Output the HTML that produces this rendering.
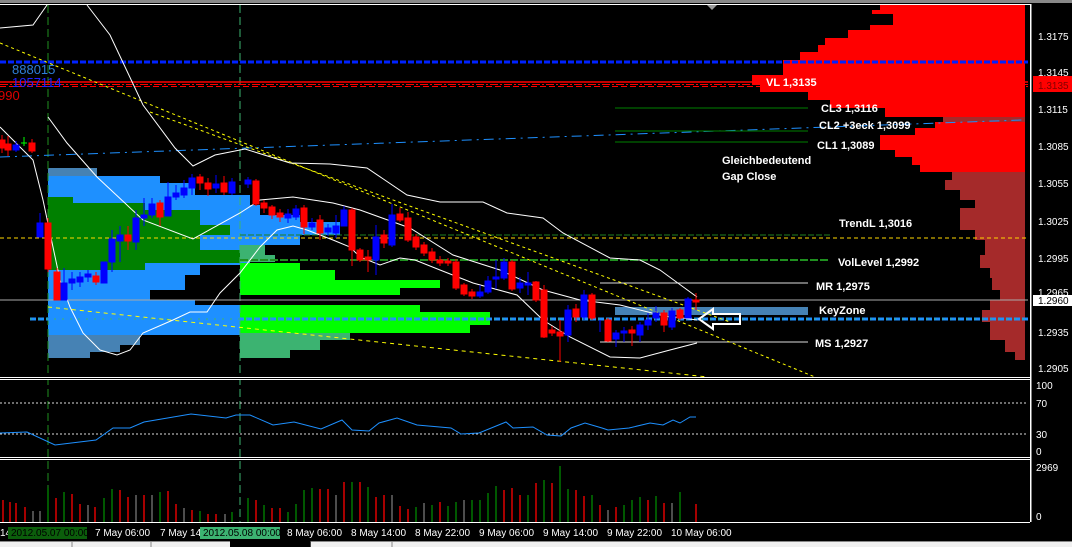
<!DOCTYPE html>
<html><head><meta charset="utf-8"><style>
html,body{margin:0;padding:0;background:#000;width:1072px;height:547px;overflow:hidden}
svg{display:block}
text{font-family:"Liberation Sans",sans-serif}
.l{fill:#fff;font-weight:bold;font-size:11px}
.a{fill:#fff;font-size:10px}
.t{fill:#fff;font-size:10px}
</style></head><body>
<svg width="1072" height="547" viewBox="0 0 1072 547" xmlns="http://www.w3.org/2000/svg">
<rect width="1072" height="547" fill="#000"/>
<rect x="0" y="0" width="1072" height="3" fill="#888"/>
<line x1="0" y1="4.5" x2="1030" y2="4.5" stroke="#fff"/>
<polygon points="707,5 717,5 712,10" fill="#999"/>

<!-- right red profile -->
<polygon fill="#ff0000" points="1025,5 880,5 880,10 872,10 872,14 893,14 893,25 870,25 870,30 848,30 848,38 825,38 825,45 818,45 818,52 800,52 800,60 783,60 783,75 752,75 752,85 760,85 760,92 808,92 808,100 830,100 830,108 885,108 885,117 1025,117"/>
<rect x="943" y="117" width="82" height="5" fill="#a52a2a"/>
<polygon fill="#ff0000" points="1025,122 935,122 935,128 915,128 915,135 880,135 880,150 895,150 895,157 912,157 912,165 920,165 920,172 1025,172"/>
<polygon fill="#a52a2a" points="1025,172 952,172 952,180 945,180 945,190 960,190 960,200 975,200 975,208 960,208 960,230 975,230 975,240 985,240 985,255 980,255 980,268 990,268 990,278 992,278 992,290 1000,290 1000,300 990,300 990,310 982,310 982,322 990,322 990,340 1005,340 1005,352 1015,352 1015,360 1025,360"/>

<!-- left profile -->
<polygon fill="#4682b4" points="48,168 97,168 97,176 48,176"/>
<polygon fill="#1e90ff" points="48,176 160,176 160,183 195,183 195,195 250,195 250,205 260,205 260,215 300,215 300,222 340,222 340,235 300,235 300,245 250,245 250,265 200,265 200,275 185,275 185,290 150,290 150,300 195,300 195,305 240,305 240,335 48,335"/>
<polygon fill="#008000" points="48,197 73,197 73,203 145,203 145,210 200,210 200,225 230,225 230,235 200,235 200,250 240,250 240,263 145,263 145,270 48,270"/>
<polygon fill="#4682b4" points="48,335 140,335 140,345 120,345 120,352 90,352 90,358 48,358"/>
<!-- second profile -->
<polygon fill="#3cb371" points="240,245 265,245 265,255 275,255 275,262 240,262"/>
<polygon fill="#00ff00" points="240,263 300,263 300,270 335,270 335,280 440,280 440,288 400,288 400,295 240,295"/>
<polygon fill="#00ff00" points="240,305 420,305 420,312 490,312 490,325 470,325 470,333 240,333"/>
<polygon fill="#3cb371" points="240,333 350,333 350,340 320,340 320,350 290,350 290,358 240,358"/>

<!-- vertical dashed -->
<line x1="48" y1="5" x2="48" y2="522" stroke="#1f8f1f" stroke-dasharray="8,4"/>
<line x1="240" y1="5" x2="240" y2="522" stroke="#3cb371" stroke-dasharray="8,4"/>

<!-- horizontal levels -->
<line x1="0" y1="62" x2="1028" y2="62" stroke="#0022ff" stroke-width="3" stroke-dasharray="6,2"/>
<line x1="0" y1="82" x2="1028" y2="82" stroke="#ff0000" stroke-width="1.5"/>
<line x1="0" y1="84.5" x2="1028" y2="84.5" stroke="#ff0000" stroke-dasharray="8,2,2,2"/>
<line x1="0" y1="86.5" x2="1028" y2="86.5" stroke="#ff0000" stroke-dasharray="6,3"/>
<line x1="0" y1="157" x2="1022" y2="120" stroke="#1e90ff" stroke-dasharray="10,5,2,5"/>
<line x1="615" y1="108" x2="808" y2="108" stroke="#008000"/>
<line x1="615" y1="131" x2="808" y2="131" stroke="#008000"/>
<line x1="615" y1="142" x2="808" y2="142" stroke="#008000"/>
<line x1="0" y1="238" x2="1028" y2="238" stroke="#ffd700" stroke-dasharray="4,3"/>
<line x1="240" y1="235" x2="830" y2="235" stroke="#1f7f1f" stroke-dasharray="6,2"/>
<line x1="240" y1="260" x2="830" y2="260" stroke="#1f8f1f" stroke-width="2" stroke-dasharray="8,2"/>
<line x1="0" y1="300" x2="1028" y2="300" stroke="#aaa"/>
<line x1="600" y1="283" x2="808" y2="283" stroke="#ddd"/>
<line x1="600" y1="342" x2="808" y2="342" stroke="#ddd"/>
<rect x="615" y="307" width="193" height="8" fill="#4682b4"/>
<line x1="30" y1="319" x2="1028" y2="319" stroke="#1e90ff" stroke-width="3" stroke-dasharray="6,2"/>
<line x1="30" y1="319" x2="1028" y2="319" stroke="#3cb371" stroke-width="1" stroke-dasharray="2,6"/>

<!-- yellow trend lines -->
<line x1="0" y1="43" x2="815" y2="377" stroke="#ffff00" stroke-dasharray="3,3"/>
<line x1="150" y1="112" x2="730" y2="322" stroke="#ffff00" stroke-dasharray="3,3"/>
<line x1="48" y1="307" x2="708" y2="377" stroke="#ffff00" stroke-dasharray="4,4"/>

<!-- bands -->
<g fill="none" stroke="#fff" stroke-width="1">
<polyline points="0,28 33,25 47,5"/>
<polyline points="87,5 110,35 143,105 175,148 193,166 215,155 245,149 290,163 330,164 367,168 407,195 440,202 483,202 507,213 543,218 563,233 610,258 640,260 660,270 697,297"/>
<polyline points="0,127 33,160 43,200 50,233 60,280 70,307 83,333 100,350 117,355 130,350 143,333 173,320 190,312 207,312 220,293 240,273 260,247 277,230 293,226 307,230 333,240 350,247 360,257 380,265 400,258 415,260 440,270 473,283 517,295 543,320 570,337 610,357 640,358 670,350 697,343"/>
<polyline points="48,117 67,143 97,177 143,220 193,239 240,213 260,200 293,197 333,203 360,210 410,228 453,255 500,270 543,290 580,300 620,305 660,315 697,320"/>
</g>

<!-- candles -->
<g id="c">
<g stroke="#ff0000" fill="#ff0000">
<line x1="2" y1="135" x2="2" y2="153"/><rect x="-1" y="140" width="6" height="8"/>
<line x1="8" y1="136" x2="8" y2="156"/><rect x="5" y="144" width="6" height="6"/>
<line x1="32" y1="139" x2="32" y2="153"/><rect x="29" y="143" width="6" height="8"/>
<line x1="48" y1="218" x2="48" y2="272"/><rect x="45" y="223" width="6" height="46"/>
<line x1="57" y1="268" x2="57" y2="300"/><rect x="54" y="272" width="6" height="28"/>
<line x1="96" y1="272" x2="96" y2="285"/><rect x="93" y="276" width="6" height="6"/>
<line x1="128" y1="226" x2="128" y2="250"/><rect x="125" y="235" width="6" height="6"/>
<line x1="160" y1="200" x2="160" y2="226"/><rect x="157" y="203" width="6" height="14"/>
<line x1="200" y1="174" x2="200" y2="190"/><rect x="197" y="177" width="6" height="6"/>
<line x1="208" y1="178" x2="208" y2="196"/><rect x="205" y="183" width="6" height="6"/>
<line x1="224" y1="176" x2="224" y2="195"/><rect x="221" y="183" width="6" height="9"/>
<line x1="256" y1="179" x2="256" y2="206"/><rect x="253" y="181" width="6" height="23"/>
<line x1="264" y1="200" x2="264" y2="213"/><rect x="261" y="203" width="6" height="5"/>
<line x1="272" y1="205" x2="272" y2="219"/><rect x="269" y="207" width="6" height="8"/>
<line x1="280" y1="209" x2="280" y2="222"/><rect x="277" y="213" width="6" height="4"/>
<line x1="304" y1="205" x2="304" y2="234"/><rect x="301" y="208" width="6" height="19"/>
<line x1="320" y1="215" x2="320" y2="240"/><rect x="317" y="220" width="6" height="13"/>
<line x1="352" y1="208" x2="352" y2="266"/><rect x="349" y="210" width="6" height="40"/>
<line x1="360" y1="248" x2="360" y2="262"/><rect x="357" y="250" width="6" height="10"/>
<line x1="368" y1="250" x2="368" y2="272"/><rect x="365" y="257" width="6" height="3"/>
<line x1="384" y1="230" x2="384" y2="248"/><rect x="381" y="235" width="6" height="8"/>
<line x1="400" y1="208" x2="400" y2="222"/><rect x="397" y="214" width="6" height="6"/>
<line x1="408" y1="212" x2="408" y2="242"/><rect x="405" y="218" width="6" height="22"/>
<line x1="416" y1="234" x2="416" y2="250"/><rect x="413" y="237" width="6" height="10"/>
<line x1="424" y1="242" x2="424" y2="256"/><rect x="421" y="245" width="6" height="8"/>
<line x1="432" y1="248" x2="432" y2="263"/><rect x="429" y="252" width="6" height="8"/>
<line x1="440" y1="256" x2="440" y2="266"/><rect x="437" y="260" width="6" height="3"/>
<line x1="448" y1="258" x2="448" y2="266"/><rect x="445" y="261" width="6" height="2"/>
<line x1="456" y1="259" x2="456" y2="290"/><rect x="453" y="262" width="6" height="26"/>
<line x1="464" y1="283" x2="464" y2="296"/><rect x="461" y="285" width="6" height="9"/>
<line x1="472" y1="289" x2="472" y2="299"/><rect x="469" y="292" width="6" height="4"/>
<line x1="512" y1="260" x2="512" y2="291"/><rect x="509" y="262" width="6" height="27"/>
<line x1="536" y1="281" x2="536" y2="302"/><rect x="533" y="282" width="6" height="18"/>
<line x1="544" y1="285" x2="544" y2="338"/><rect x="541" y="290" width="6" height="47"/>
<line x1="552" y1="326" x2="552" y2="336"/><rect x="549" y="330" width="6" height="3"/>
<line x1="560" y1="320" x2="560" y2="362"/><rect x="557" y="332" width="6" height="4"/>
<line x1="576" y1="304" x2="576" y2="322"/><rect x="573" y="309" width="6" height="8"/>
<line x1="592" y1="293" x2="592" y2="320"/><rect x="589" y="295" width="6" height="23"/>
<line x1="608" y1="318" x2="608" y2="342"/><rect x="605" y="320" width="6" height="21"/>
<line x1="632" y1="326" x2="632" y2="346"/><rect x="629" y="330" width="6" height="3"/>
<line x1="664" y1="310" x2="664" y2="332"/><rect x="661" y="313" width="6" height="12"/>
<line x1="680" y1="308" x2="680" y2="320"/><rect x="677" y="310" width="6" height="8"/>
<line x1="696" y1="293" x2="696" y2="310"/><rect x="693" y="300" width="6" height="2"/>
</g>
<g stroke="#0000ff" fill="#0000ff">
<line x1="16" y1="141" x2="16" y2="152"/><rect x="13" y="145" width="6" height="5"/>
<line x1="40" y1="213" x2="40" y2="237"/><rect x="37" y="223" width="6" height="14"/>
<line x1="64" y1="268" x2="64" y2="300"/><rect x="61" y="283" width="6" height="17"/>
<line x1="72" y1="272" x2="72" y2="290"/><rect x="69" y="279" width="6" height="4"/>
<line x1="80" y1="272" x2="80" y2="287"/><rect x="77" y="277" width="6" height="5"/>
<line x1="88" y1="270" x2="88" y2="282"/><rect x="85" y="274" width="6" height="3"/>
<line x1="104" y1="262" x2="104" y2="283"/><rect x="101" y="262" width="6" height="21"/>
<line x1="112" y1="230" x2="112" y2="272"/><rect x="109" y="239" width="6" height="23"/>
<line x1="120" y1="226" x2="120" y2="262"/><rect x="117" y="235" width="6" height="6"/>
<line x1="136" y1="210" x2="136" y2="250"/><rect x="133" y="218" width="6" height="24"/>
<line x1="144" y1="198" x2="144" y2="226"/><rect x="141" y="215" width="6" height="3"/>
<line x1="152" y1="198" x2="152" y2="218"/><rect x="149" y="204" width="6" height="11"/>
<line x1="168" y1="182" x2="168" y2="216"/><rect x="165" y="197" width="6" height="19"/>
<line x1="176" y1="185" x2="176" y2="200"/><rect x="173" y="193" width="6" height="4"/>
<line x1="184" y1="180" x2="184" y2="198"/><rect x="181" y="188" width="6" height="7"/>
<line x1="192" y1="174" x2="192" y2="195"/><rect x="189" y="178" width="6" height="10"/>
<line x1="216" y1="175" x2="216" y2="193"/><rect x="213" y="184" width="6" height="4"/>
<line x1="232" y1="178" x2="232" y2="195"/><rect x="229" y="182" width="6" height="11"/>
<line x1="248" y1="177" x2="248" y2="188"/><rect x="245" y="180" width="6" height="4"/>
<line x1="288" y1="209" x2="288" y2="223"/><rect x="285" y="214" width="6" height="4"/>
<line x1="296" y1="205" x2="296" y2="220"/><rect x="293" y="209" width="6" height="8"/>
<line x1="312" y1="218" x2="312" y2="230"/><rect x="309" y="223" width="6" height="4"/>
<line x1="328" y1="224" x2="328" y2="236"/><rect x="325" y="228" width="6" height="4"/>
<line x1="336" y1="215" x2="336" y2="238"/><rect x="333" y="226" width="6" height="7"/>
<line x1="344" y1="206" x2="344" y2="226"/><rect x="341" y="210" width="6" height="16"/>
<line x1="376" y1="225" x2="376" y2="275"/><rect x="373" y="237" width="6" height="23"/>
<line x1="392" y1="204" x2="392" y2="247"/><rect x="389" y="215" width="6" height="30"/>
<line x1="480" y1="285" x2="480" y2="298"/><rect x="477" y="292" width="6" height="4"/>
<line x1="488" y1="276" x2="488" y2="294"/><rect x="485" y="281" width="6" height="11"/>
<line x1="496" y1="260" x2="496" y2="289"/><rect x="493" y="277" width="6" height="2"/>
<line x1="504" y1="258" x2="504" y2="280"/><rect x="501" y="262" width="6" height="16"/>
<line x1="520" y1="277" x2="520" y2="293"/><rect x="517" y="283" width="6" height="5"/>
<line x1="528" y1="272" x2="528" y2="295"/><rect x="525" y="283" width="6" height="2"/>
<line x1="568" y1="305" x2="568" y2="342"/><rect x="565" y="310" width="6" height="25"/>
<line x1="584" y1="290" x2="584" y2="320"/><rect x="581" y="295" width="6" height="22"/>
<line x1="600" y1="320" x2="600" y2="332"/>
<line x1="616" y1="330" x2="616" y2="347"/><rect x="613" y="333" width="6" height="6"/>
<line x1="624" y1="327" x2="624" y2="342"/><rect x="621" y="331" width="6" height="2"/>
<line x1="640" y1="322" x2="640" y2="342"/><rect x="637" y="325" width="6" height="10"/>
<line x1="648" y1="313" x2="648" y2="330"/><rect x="645" y="320" width="6" height="5"/>
<line x1="656" y1="306" x2="656" y2="322"/><rect x="653" y="313" width="6" height="5"/>
<line x1="672" y1="308" x2="672" y2="330"/><rect x="669" y="311" width="6" height="16"/>
<line x1="688" y1="297" x2="688" y2="318"/><rect x="685" y="299" width="6" height="19"/>
</g>
<line x1="24" y1="137" x2="24" y2="146" stroke="#00ff00"/><line x1="21" y1="143" x2="27" y2="143" stroke="#00ff00"/>
</g>

<!-- arrow -->
<polygon points="699,319 713,309 713,314 740,314 740,324 713,324 713,329" fill="none" stroke="#fff" stroke-width="2"/>

<!-- left labels -->
<text x="12" y="74" fill="#2f7fd8" font-size="13" style="font-family:'Liberation Sans',sans-serif">888015</text>
<text x="12" y="87" fill="#2222ff" font-size="13" style="font-family:'Liberation Sans',sans-serif">1057114</text>
<text x="-2" y="100" fill="#dd0000" font-size="13" style="font-family:'Liberation Sans',sans-serif">990</text>

<!-- right labels -->
<text class="l" x="766" y="86">VL 1,3135</text>
<text class="l" x="821" y="112">CL3 1,3116</text>
<text class="l" x="819" y="129">CL2 +3eck 1,3099</text>
<text class="l" x="817" y="149">CL1 1,3089</text>
<text class="l" x="722" y="164">Gleichbedeutend</text>
<text class="l" x="722" y="180">Gap Close</text>
<text class="l" x="839" y="227">TrendL 1,3016</text>
<text class="l" x="838" y="266">VolLevel 1,2992</text>
<text class="l" x="816" y="290">MR 1,2975</text>
<text class="l" x="819" y="314">KeyZone</text>
<text class="l" x="815" y="347">MS 1,2927</text>

<!-- axis -->
<line x1="1030.5" y1="4" x2="1030.5" y2="522" stroke="#fff"/>
<g class="a">
<text class="a" x="1038" y="40">1.3175</text>
<text class="a" x="1038" y="76">1.3145</text>
<rect x="1033" y="76" width="39" height="16" fill="#ff0000"/>
<text x="1038" y="89" fill="#800000" font-size="10">1.3135</text>
<text class="a" x="1038" y="113">1.3115</text>
<text class="a" x="1038" y="150">1.3085</text>
<text class="a" x="1038" y="187">1.3055</text>
<text class="a" x="1038" y="225">1.3025</text>
<text class="a" x="1038" y="262">1.2995</text>
<text class="a" x="1038" y="296">1.2965</text>
<rect x="1033" y="295" width="39" height="11" fill="#fff"/>
<text x="1038" y="304" fill="#000" font-size="10">1.2960</text>
<text class="a" x="1038" y="336">1.2935</text>
<text class="a" x="1038" y="372">1.2905</text>
</g>

<!-- separators -->
<line x1="0" y1="377.5" x2="1030" y2="377.5" stroke="#fff"/>
<line x1="0" y1="379.5" x2="1030" y2="379.5" stroke="#fff"/>
<line x1="0" y1="457.5" x2="1030" y2="457.5" stroke="#fff"/>
<line x1="0" y1="459.5" x2="1030" y2="459.5" stroke="#fff"/>
<line x1="0" y1="522.5" x2="1030" y2="522.5" stroke="#fff"/>
<rect x="0" y="378" width="1030" height="1" fill="#000"/>
<rect x="0" y="458" width="1030" height="1" fill="#000"/>

<!-- RSI -->
<line x1="0" y1="403" x2="1028" y2="403" stroke="#ddd" stroke-dasharray="2,2"/>
<line x1="0" y1="434" x2="1028" y2="434" stroke="#ddd" stroke-dasharray="2,2"/>
<polyline fill="none" stroke="#1e90ff" points="0,433 27,432 55,445 96,440 113,428 130,428 144,422 191,414 226,418 236,415 250,415 273,425 294,422 321,429 342,420 352,430 369,431 379,423 397,418 417,425 451,428 461,434 479,433 506,422 513,428 533,427 547,435 561,436 571,428 585,423 602,428 608,430 629,428 650,423 663,425 673,420 680,423 690,417 696,417"/>
<text class="a" x="1036" y="389">100</text>
<text class="a" x="1036" y="407">70</text>
<text class="a" x="1036" y="438">30</text>
<text class="a" x="1036" y="455">0</text>

<!-- volume -->
<g stroke-width="1.3">
<line x1="3" y1="500" x2="3" y2="522" stroke="#f00"/><line x1="10" y1="502" x2="10" y2="522" stroke="#f00"/><line x1="16" y1="503" x2="16" y2="522" stroke="#f00"/><line x1="25" y1="507" x2="25" y2="522" stroke="#f00"/><line x1="33" y1="511" x2="33" y2="522" stroke="#777"/><line x1="40" y1="511" x2="40" y2="522" stroke="#777"/><line x1="48" y1="488" x2="48" y2="522" stroke="#080"/><line x1="56" y1="498" x2="56" y2="522" stroke="#f00"/><line x1="64" y1="492" x2="64" y2="522" stroke="#080"/><line x1="72" y1="494" x2="72" y2="522" stroke="#f00"/><line x1="80" y1="504" x2="80" y2="522" stroke="#f00"/><line x1="88" y1="505" x2="88" y2="522" stroke="#777"/><line x1="95" y1="507" x2="95" y2="522" stroke="#f00"/><line x1="104" y1="498" x2="104" y2="522" stroke="#080"/><line x1="112" y1="489" x2="112" y2="522" stroke="#080"/><line x1="120" y1="490" x2="120" y2="522" stroke="#f00"/><line x1="128" y1="497" x2="128" y2="522" stroke="#f00"/><line x1="136" y1="495" x2="136" y2="522" stroke="#777"/><line x1="144" y1="495" x2="144" y2="522" stroke="#f00"/><line x1="152" y1="495" x2="152" y2="522" stroke="#777"/><line x1="160" y1="492" x2="160" y2="522" stroke="#080"/><line x1="168" y1="491" x2="168" y2="522" stroke="#f00"/><line x1="176" y1="504" x2="176" y2="522" stroke="#f00"/><line x1="184" y1="508" x2="184" y2="522" stroke="#777"/><line x1="192" y1="510" x2="192" y2="522" stroke="#f00"/><line x1="200" y1="511" x2="200" y2="522" stroke="#080"/><line x1="208" y1="514" x2="208" y2="522" stroke="#f00"/><line x1="216" y1="514" x2="216" y2="522" stroke="#f00"/><line x1="225" y1="514" x2="225" y2="522" stroke="#777"/><line x1="232" y1="512" x2="232" y2="522" stroke="#080"/><line x1="248" y1="498" x2="248" y2="522" stroke="#080"/><line x1="256" y1="500" x2="256" y2="522" stroke="#f00"/><line x1="264" y1="505" x2="264" y2="522" stroke="#080"/><line x1="272" y1="508" x2="272" y2="522" stroke="#f00"/><line x1="280" y1="508" x2="280" y2="522" stroke="#f00"/><line x1="288" y1="512" x2="288" y2="522" stroke="#080"/><line x1="296" y1="504" x2="296" y2="522" stroke="#080"/><line x1="304" y1="490" x2="304" y2="522" stroke="#080"/><line x1="312" y1="488" x2="312" y2="522" stroke="#080"/><line x1="320" y1="489" x2="320" y2="522" stroke="#f00"/><line x1="328" y1="489" x2="328" y2="522" stroke="#f00"/><line x1="336" y1="495" x2="336" y2="522" stroke="#777"/><line x1="344" y1="482" x2="344" y2="522" stroke="#f00"/><line x1="352" y1="482" x2="352" y2="522" stroke="#080"/><line x1="360" y1="482" x2="360" y2="522" stroke="#f00"/><line x1="368" y1="487" x2="368" y2="522" stroke="#080"/><line x1="376" y1="497" x2="376" y2="522" stroke="#f00"/><line x1="384" y1="495" x2="384" y2="522" stroke="#f00"/><line x1="392" y1="495" x2="392" y2="522" stroke="#777"/><line x1="400" y1="506" x2="400" y2="522" stroke="#f00"/><line x1="408" y1="509" x2="408" y2="522" stroke="#f00"/><line x1="416" y1="507" x2="416" y2="522" stroke="#080"/><line x1="424" y1="503" x2="424" y2="522" stroke="#777"/><line x1="432" y1="505" x2="432" y2="522" stroke="#080"/><line x1="440" y1="502" x2="440" y2="522" stroke="#f00"/><line x1="448" y1="506" x2="448" y2="522" stroke="#080"/><line x1="456" y1="502" x2="456" y2="522" stroke="#080"/><line x1="464" y1="500" x2="464" y2="522" stroke="#777"/><line x1="472" y1="500" x2="472" y2="522" stroke="#080"/><line x1="480" y1="500" x2="480" y2="522" stroke="#080"/><line x1="488" y1="493" x2="488" y2="522" stroke="#080"/><line x1="496" y1="486" x2="496" y2="522" stroke="#080"/><line x1="504" y1="490" x2="504" y2="522" stroke="#f00"/><line x1="512" y1="488" x2="512" y2="522" stroke="#f00"/><line x1="520" y1="495" x2="520" y2="522" stroke="#f00"/><line x1="528" y1="495" x2="528" y2="522" stroke="#080"/><line x1="536" y1="483" x2="536" y2="522" stroke="#f00"/><line x1="544" y1="480" x2="544" y2="522" stroke="#080"/><line x1="552" y1="483" x2="552" y2="522" stroke="#f00"/><line x1="560" y1="466" x2="560" y2="522" stroke="#080"/><line x1="568" y1="489" x2="568" y2="522" stroke="#080"/><line x1="576" y1="490" x2="576" y2="522" stroke="#f00"/><line x1="584" y1="496" x2="584" y2="522" stroke="#f00"/><line x1="592" y1="495" x2="592" y2="522" stroke="#080"/><line x1="600" y1="505" x2="600" y2="522" stroke="#f00"/><line x1="608" y1="510" x2="608" y2="522" stroke="#777"/><line x1="616" y1="507" x2="616" y2="522" stroke="#f00"/><line x1="624" y1="505" x2="624" y2="522" stroke="#080"/><line x1="632" y1="500" x2="632" y2="522" stroke="#080"/><line x1="640" y1="497" x2="640" y2="522" stroke="#080"/><line x1="648" y1="500" x2="648" y2="522" stroke="#f00"/><line x1="656" y1="496" x2="656" y2="522" stroke="#080"/><line x1="664" y1="503" x2="664" y2="522" stroke="#f00"/><line x1="672" y1="503" x2="672" y2="522" stroke="#777"/><line x1="680" y1="492" x2="680" y2="522" stroke="#080"/><line x1="696" y1="504" x2="696" y2="522" stroke="#f00"/>
</g>
<text class="a" x="1036" y="471">2969</text>
<text class="a" x="1036" y="520">0</text>

<!-- time axis -->
<g class="t">
<text class="t" x="0" y="536">14</text>
<rect x="8" y="527" width="79" height="12" fill="#0b5e0b"/>
<text x="11" y="536" fill="#000" font-size="10">2012.05.07 00:00</text>
<text class="t" x="95" y="536">7 May 06:00</text>
<text class="t" x="160" y="536">7 May 14</text>
<rect x="200" y="527" width="80" height="12" fill="#3cb371"/>
<text x="203" y="536" fill="#000" font-size="10">2012.05.08 00:00</text>
<text class="t" x="287" y="536">8 May 06:00</text>
<text class="t" x="351" y="536">8 May 14:00</text>
<text class="t" x="415" y="536">8 May 22:00</text>
<text class="t" x="479" y="536">9 May 06:00</text>
<text class="t" x="543" y="536">9 May 14:00</text>
<text class="t" x="607" y="536">9 May 22:00</text>
<text class="t" x="671" y="536">10 May 06:00</text>
</g>
<line x1="1031" y1="4" x2="1031" y2="522" stroke="#fff"/>

<!-- bottom tabs -->
<rect x="0" y="541" width="230" height="6" fill="#f0f0f0"/>
<line x1="0" y1="541.5" x2="230" y2="541.5" stroke="#888"/>
<line x1="72" y1="541" x2="72" y2="547" stroke="#888"/>
<line x1="151" y1="541" x2="151" y2="547" stroke="#888"/>
<rect x="310" y="541" width="762" height="6" fill="#f0f0f0"/>
<line x1="310" y1="541.5" x2="1072" y2="541.5" stroke="#888"/>
<line x1="310.5" y1="541" x2="310.5" y2="547" stroke="#444"/>
<line x1="392" y1="541" x2="392" y2="547" stroke="#888"/>
</svg>
</body></html>
